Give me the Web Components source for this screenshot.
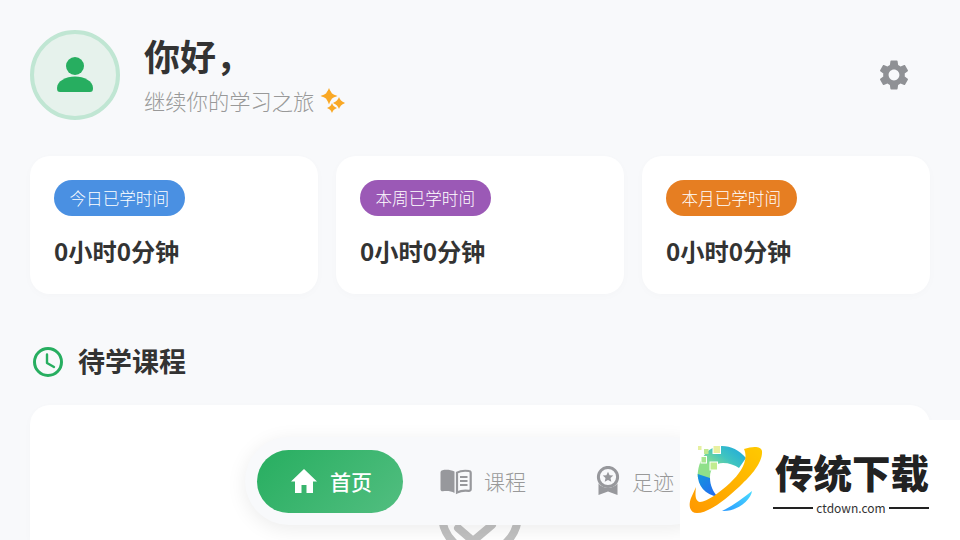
<!DOCTYPE html>
<html lang="zh">
<head>
<meta charset="utf-8">
<title>学习</title>
<style>
  html, body { margin: 0; height: 100%; }
  body {
    width: 960px;
    height: 540px;
    overflow: hidden;
    position: relative;
    background: #f8f9fb;
    font-family: "Noto Sans CJK SC", "Noto Sans", sans-serif;
  }
  #page { display: flex; flex-direction: column; padding: 30px 30px 0; }
</style>
</head>
<body>
<div id="page">
  <profile-header></profile-header>
  <div id="stats" style="display:flex;gap:18px;margin-top:36px">
    <stat-card label="今日已学时间" color="#4a90e2" value="0小时0分钟"></stat-card>
    <stat-card label="本周已学时间" color="#9b59b6" value="0小时0分钟"></stat-card>
    <stat-card label="本月已学时间" color="#e67e22" value="0小时0分钟"></stat-card>
  </div>
  <section-title>待学课程</section-title>
  <course-panel></course-panel>
</div>
<bottom-nav>
  <nav-item active label="首页">
    <svg slot="icon" width="28" height="28" viewBox="0 0 28 28"><path fill="#fff" d="M14 2 1 14.500h4V26h6.500v-8h5v8H23V14.500h4z"/></svg>
  </nav-item>
  <nav-item label="课程">
    <svg slot="icon" width="32" height="28" viewBox="0 0 32 28"><path fill="#97989c" d="M14.500 4.500C11 2.800 6 2.500 2.500 3.200 1.300 3.400.5 4.300.5 5.500v17c0 1.300 1.200 2 2.400 1.800 3.800-.7 8.200-.3 11.600 1.700z"/><path fill="none" stroke="#97989c" stroke-width="2.200" d="M17 5.600C20 3.900 25 3.500 29 4c1 .1 1.700.9 1.700 1.900v16.300c0 1-.9 1.700-1.900 1.600-3.800-.5-8.300-.1-11.800 1.700z"/><path stroke="#97989c" stroke-width="1.800" d="M20 10h7.500M20 14h7.500M20 18h7.500"/></svg>
  </nav-item>
  <nav-item label="足迹">
    <svg slot="icon" width="24" height="30" viewBox="0 0 24 30"><circle cx="12" cy="11" r="9.600" fill="none" stroke="#97989c" stroke-width="3"/><path fill="#97989c" d="m12 5.800 1.600 3.400 3.700.4-2.800 2.500.8 3.700-3.300-1.900-3.300 1.900.8-3.700-2.800-2.500 3.700-.4z"/><path fill="#97989c" d="M2.500 17.500c2.500 3 5.800 4.400 9.500 4.400s7-1.400 9.500-4.400V29L12 25.500 2.500 29z"/></svg>
  </nav-item>
</bottom-nav>
<ct-watermark></ct-watermark>

<script>
class ProfileHeader extends HTMLElement {
  constructor() {
    super();
    this.attachShadow({mode: 'open'}).innerHTML = `
      <style>
        :host { display: flex; align-items: center; height: 90px; }
        #avatar {
          width: 90px; height: 90px; box-sizing: border-box;
          border: 4px solid #c0e6d3; border-radius: 50%;
          background: #e6f2ec;
          display: flex; align-items: center; justify-content: center;
        }
        #text { margin-left: 24px; flex: 1; align-self: flex-start; }
        h1 { margin: 0 0 6px; font-size: 36px; line-height: 50px; font-weight: 700; color: #333; }
        p { margin: 0; font-size: 21.300px; line-height: 30px; font-weight: 300; color: #999; display: flex; align-items: center; gap: 6px; }
        #gear { margin-right: 18px; display: block; }
      </style>
      <div id="avatar">
        <svg width="38" height="38" viewBox="0 0 38 38"><circle cx="19" cy="10" r="9" fill="#27ae60"/><path fill="#27ae60" d="M1 32c0-7 9-11.500 18-11.500S37 25 37 32c0 3-1 4-3 4H4c-2 0-3-1-3-4z"/></svg>
      </div>
      <div id="text">
        <h1>你好，</h1>
        <p>继续你的学习之旅
          <svg width="26" height="26" viewBox="0 0 26 26"><path fill="#f9a825" d="M9 0c1 2.500 2 3.500 2.800 5.200C13 6.300 15 7 17.500 8c-2.500 1-4.500 1.700-5.700 2.800C11 12.500 10 13.500 9 16.500c-1-3-2-4-2.800-5.700C5 9.700 3 9 .5 8c2.500-1 4.500-1.700 5.700-2.800C7 3.500 8 2.500 9 0z"/><path fill="#f9a825" d="M19 9c.7 1.800 1.300 2.500 2 3.500.8.800 2.200 1.600 4 2.500-1.800.9-3.200 1.700-4 2.500-.7 1-1.300 1.700-2 3.500-.7-1.800-1.300-2.500-2-3.500-.8-.8-2.200-1.600-4-2.500 1.800-.9 3.200-1.700 4-2.500.7-1 1.300-1.700 2-3.500z"/><path fill="#f9a825" d="M12 15c.6 1.500 1.100 2.200 1.700 3 .7.700 1.800 1.300 3.300 2-1.500.7-2.600 1.300-3.300 2-.6.800-1.100 1.500-1.700 3-.6-1.500-1.100-2.200-1.700-3-.7-.7-1.800-1.300-3.300-2 1.500-.7 2.600-1.300 3.300-2 .6-.8 1.100-1.500 1.700-3z"/></svg>
        </p>
      </div>
      <svg id="gear" width="36" height="36" viewBox="0 0 24 24"><path fill="#8f9195" d="M19.140 12.940c.04-.3.06-.61.06-.94 0-.32-.02-.64-.07-.94l2.030-1.580c.18-.14.23-.41.120-.61l-1.920-3.320c-.12-.22-.37-.29-.59-.22l-2.390.96c-.5-.38-1.030-.7-1.620-.94l-.36-2.540c-.04-.24-.24-.41-.48-.41h-3.840c-.24 0-.43.17-.47.41l-.36 2.540c-.59.24-1.130.57-1.620.94l-2.390-.96c-.22-.08-.47 0-.59.22L2.740 8.870c-.12.21-.08.47.12.61l2.030 1.580c-.05.3-.09.63-.09.94s.02.64.07.94l-2.030 1.580c-.18.14-.23.41-.12.61l1.920 3.320c.12.22.37.29.59.22l2.390-.96c.5.38 1.030.7 1.620.94l.36 2.540c.05.24.24.41.48.41h3.840c.24 0 .44-.17.47-.41l.36-2.540c.59-.24 1.130-.56 1.620-.94l2.390.96c.22.08.47 0 .59-.22l1.920-3.320c.12-.22.07-.47-.12-.61l-2.010-1.580zM12 15.600c-1.980 0-3.600-1.620-3.600-3.600s1.620-3.600 3.600-3.600 3.600 1.620 3.600 3.600-1.620 3.600-3.600 3.600z"/></svg>`;
  }
}
customElements.define('profile-header', ProfileHeader);

class StatCard extends HTMLElement {
  constructor() {
    super();
    this.attachShadow({mode: 'open'});
  }
  connectedCallback() {
    const label = this.getAttribute('label');
    const color = this.getAttribute('color');
    const value = this.getAttribute('value');
    this.shadowRoot.innerHTML = `
      <style>
        :host {
          display: block; flex: 1; height: 138px; box-sizing: border-box;
          padding: 24px; background: #fff; border-radius: 20px;
          box-shadow: 0 2px 10px rgba(0,0,0,.02);
        }
        span {
          display: inline-block; height: 36px; line-height: 36px; padding: 0 15.500px;
          border-radius: 18px; color: #fff; font-size: 16.600px; font-weight: 300; background: ${color};
        }
        div { margin-top: 15px; font-size: 24.200px; line-height: 40px; font-weight: 700; color: #333; }
      </style>
      <span>${label}</span>
      <div>${value}</div>`;
  }
}
customElements.define('stat-card', StatCard);

class SectionTitle extends HTMLElement {
  constructor() {
    super();
    this.attachShadow({mode: 'open'}).innerHTML = `
      <style>
        :host { display: flex; align-items: center; height: 40px; margin-top: 48px; margin-bottom: 23px; gap: 14px; padding-left: 2px; }
        h2 { margin: 0 0 2px; font-size: 27px; line-height: 38px; font-weight: 700; color: #333; }
        svg { display: block; }
      </style>
      <svg width="32" height="32" viewBox="0 0 32 32"><circle cx="16" cy="16" r="13.500" fill="none" stroke="#27ae60" stroke-width="3"/><path fill="none" stroke="#27ae60" stroke-width="2.400" stroke-linecap="round" stroke-linejoin="round" d="M15 8.500V17l7 4"/></svg>
      <h2><slot></slot></h2>`;
  }
}
customElements.define('section-title', SectionTitle);

class CoursePanel extends HTMLElement {
  constructor() {
    super();
    this.attachShadow({mode: 'open'}).innerHTML = `
      <style>
        :host {
          display: flex; justify-content: center; height: 135px; padding-top: 68px; box-sizing: border-box;
          background: #fff; border-radius: 20px 20px 0 0;
          box-shadow: 0 2px 10px rgba(0,0,0,.02);
        }
        svg { display: block; }
      </style>
      <svg width="84" height="67" viewBox="0 0 84 67"><circle cx="42" cy="42" r="38" fill="none" stroke="#c0c0c0" stroke-width="8"/><path fill="none" stroke="#c0c0c0" stroke-width="8" stroke-linecap="round" d="M20 55 35 68 54 52"/></svg>`;
  }
}
customElements.define('course-panel', CoursePanel);

class BottomNav extends HTMLElement {
  constructor() {
    super();
    this.attachShadow({mode: 'open'}).innerHTML = `
      <style>
        :host {
          position: absolute; left: 245px; top: 437px;
          display: flex; align-items: center; gap: 4px;
          box-sizing: border-box; width: 470px; height: 88px; padding: 0 12px;
          background: #f8f9fb; border-radius: 44px;
          box-shadow: 0 4px 20px rgba(0,0,0,.08);
        }
      </style>
      <slot></slot>`;
  }
}
customElements.define('bottom-nav', BottomNav);

class NavItem extends HTMLElement {
  constructor() {
    super();
    this.attachShadow({mode: 'open'});
  }
  connectedCallback() {
    this.shadowRoot.innerHTML = `
      <style>
        :host {
          display: flex; flex: none; align-items: center; gap: 12px;
          height: 63px; padding: 0 33px; border-radius: 32px;
          font-size: 21px; font-weight: 300; color: #999; white-space: nowrap;
        }
        :host([active]) {
          padding: 0 31px 0 33px; color: #fff; font-weight: 500;
          background: linear-gradient(135deg, #27ae60, #52be80);
        }
        ::slotted(svg) { display: block; flex: none; }
      </style>
      <slot name="icon"></slot>
      <span>${this.getAttribute('label')}</span>`;
  }
}
customElements.define('nav-item', NavItem);

class CtWatermark extends HTMLElement {
  constructor() {
    super();
    this.attachShadow({mode: 'open'}).innerHTML = `
      <style>
        :host {
          position: absolute; left: 680px; top: 420px; width: 280px; height: 120px;
          background: #fff; display: flex; align-items: center; gap: 6px; padding-left: 5px; box-sizing: border-box;
        }
        #name { font-size: 38.500px; line-height: 46px; font-weight: 900; color: #222; white-space: nowrap; padding-left: 2px; }
        #url { display: flex; align-items: center; gap: 3px; font-size: 12px; line-height: 16px; color: #333; margin-top: 6px; }
        #url i { flex: 1; height: 2px; background: #222; }
        #brand { width: 156px; margin-top: 3px; }
      </style>
      <svg width="82" height="80" viewBox="0 0 82 80">
        <defs>
          <linearGradient id="c" x1="1" y1="0" x2=".1" y2=".8"><stop offset="0" stop-color="#1aa5e3"/><stop offset=".45" stop-color="#3fc4c0"/><stop offset=".8" stop-color="#8fe08a"/></linearGradient>
          <linearGradient id="d" x1="0" y1="0" x2="1" y2="1"><stop offset="0" stop-color="#1596dc"/><stop offset="1" stop-color="#2566f4"/></linearGradient>
          <linearGradient id="o" x1="1" y1="0" x2="0" y2="1"><stop offset="0" stop-color="#ffca00"/><stop offset="1" stop-color="#ff9800"/></linearGradient>
          <linearGradient id="b" x1="1" y1="0" x2="0" y2="1"><stop offset="0" stop-color="#4adcff"/><stop offset="1" stop-color="#2a9aff"/></linearGradient>
        </defs>
        <path fill="url(#c)" d="M61 18C54 10 46 6 37 6 22 6 12.700 20 12.700 37l12.300 3V37c0-8 5-14 13-14 6 0 12 2 16 5z"/>
        <path fill="url(#d)" d="M12.700 34c0 12 7 20 20.500 23.300C28 52 25 45 25 38z"/>
        <path fill="url(#o)" d="M59 9c9-3 17-3 18 2 1 11-11 25-19 32-10 10-20 18-26 22-8 5-14 8-20 8-7 0-9-7-6-15l5-11c-1 8-1 14 4 15 7 0 20-10 30-19C56 33 64 20 59 9z"/>
        <path fill="url(#b)" d="M67 51c-1 9-15 21-30 20 11-5 21-13 30-20z"/>
        <rect x="13" y="6" width="3.500" height="4" fill="#e6f0a0"/>
        <rect x="19" y="9" width="4.500" height="5" fill="#bfe88f"/>
        <rect x="28" y="5.500" width="7.500" height="8" fill="#e8f0a0" stroke="#fff"/>
        <rect x="16" y="16.500" width="5.500" height="6.500" fill="#a8e690" stroke="#fff"/>
        <rect x="25" y="22" width="7.500" height="8" fill="#c2ec90" stroke="#fff"/>
      </svg>
      <div id="brand">
        <div id="name">传统下载</div>
        <div id="url"><i></i><span>ctdown.com</span><i></i></div>
      </div>`;
  }
}
customElements.define('ct-watermark', CtWatermark);
</script>
</body>
</html>
